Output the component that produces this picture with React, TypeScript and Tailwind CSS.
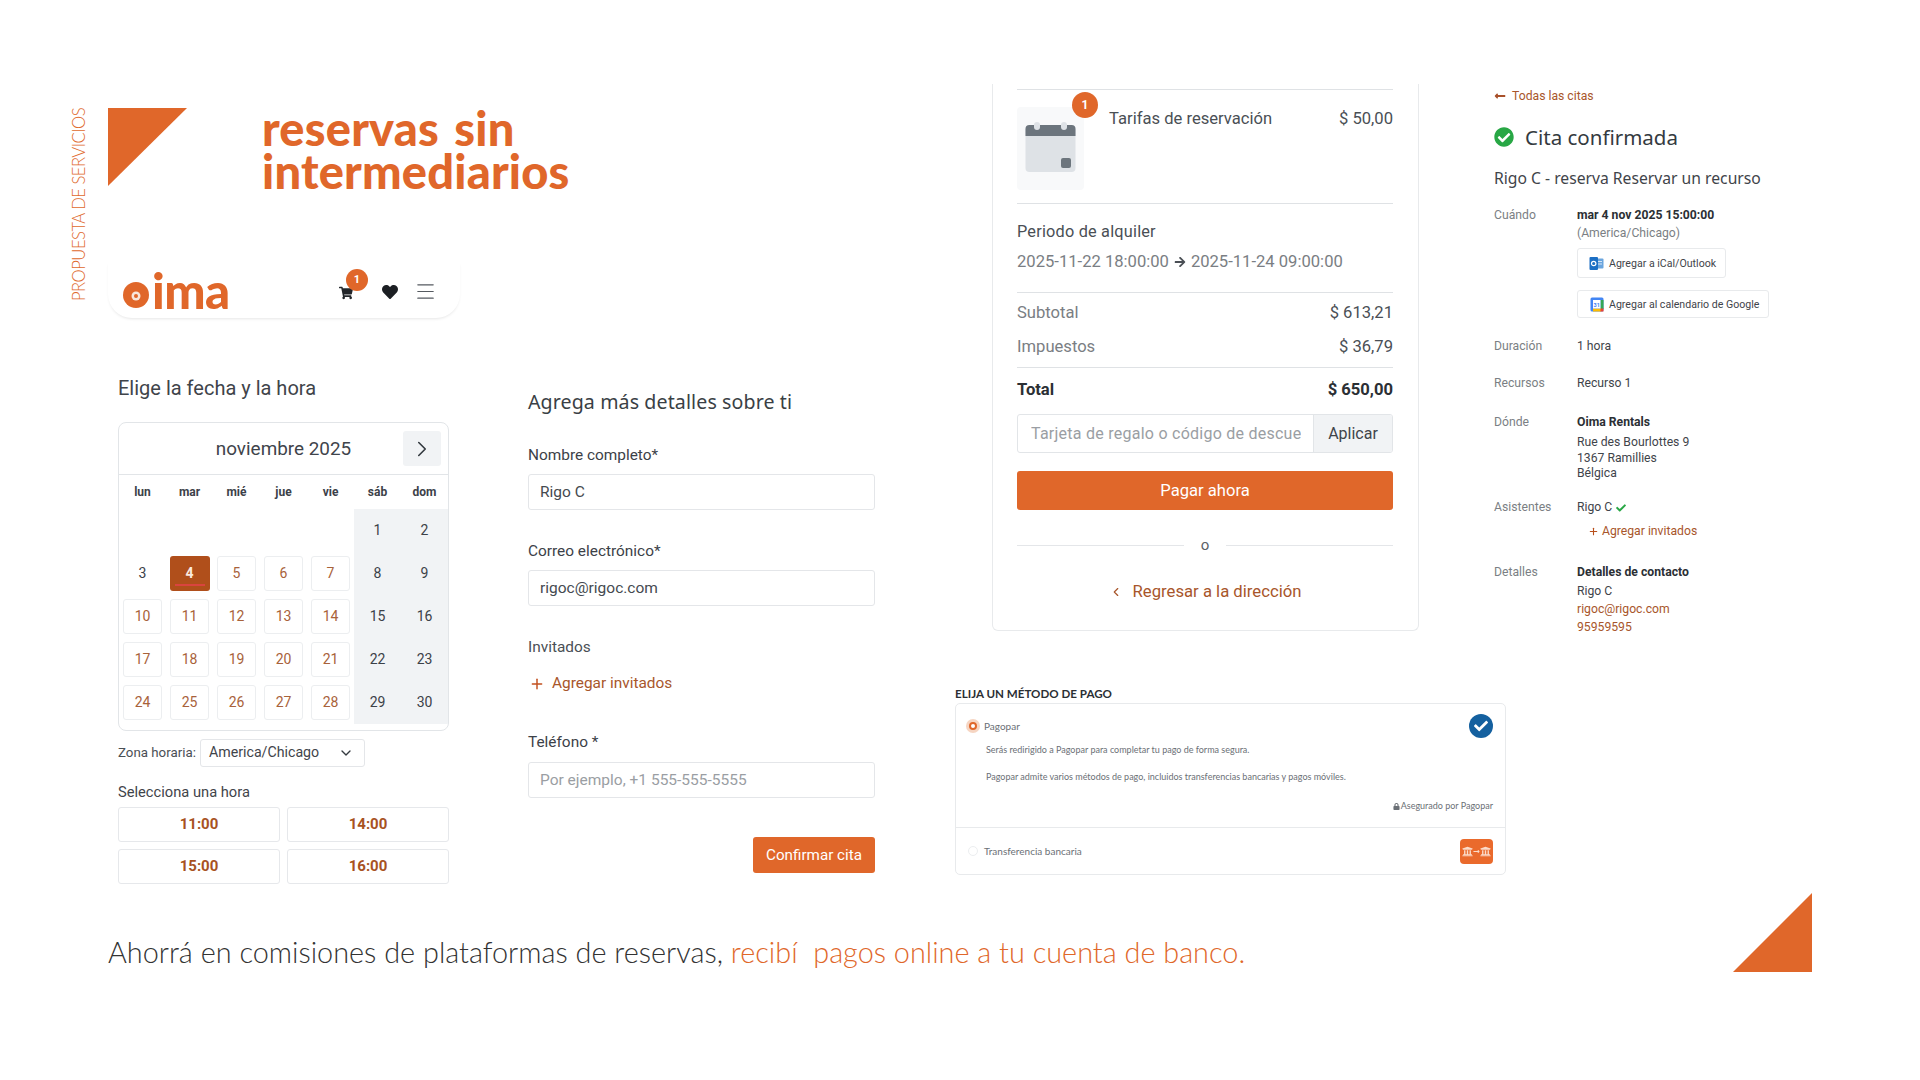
import React from 'react';
import { ChevronDown, ChevronLeft, ChevronRight, Menu, Plus } from 'lucide-react';
import { FaArrowRight, FaCheck, FaCheckCircle, FaHeart, FaLock, FaLongArrowAltLeft, FaLongArrowAltRight, FaShoppingCart, FaUniversity } from 'react-icons/fa';

const weekdays = ['lun', 'mar', 'mié', 'jue', 'vie', 'sáb', 'dom'];
const days: (number | null)[] = [null, null, null, null, null, 1, 2, ...Array.from({ length: 28 }, (_, i) => i + 3)];

function CalendarDay({ day, index }: { day: number | null; index: number }) {
    const weekend = index % 7 >= 5;
    const bookable = day !== null && !weekend && day > 3;
    return (
        <div className={`h-[43px] flex items-center justify-center ${weekend ? 'bg-[#f1f3f5]' : ''}`}>
            {weekend || !bookable ? (
                <span className="text-[14px] text-[#3c4148]">{day}</span>
            ) : day === 4 ? (
                <div className="w-[40px] h-[35px] rounded-[3px] bg-[#b04f1b] text-[#fbe9df] text-[14px] font-bold flex items-center justify-center relative">
                    4
                    <span className="absolute left-[5px] right-[5px] bottom-[5px] h-[2px] bg-[#d9443f]" />
                </div>
            ) : (
                <div className="w-[39px] h-[35px] rounded-[3px] border border-[#eceef0] text-[#a8623a] text-[14px] flex items-center justify-center">
                    {day}
                </div>
            )}
        </div>
    );
}

function Calendar() {
    return (
        <div className="w-[331px] h-[309px] rounded-lg border border-[#e2e5e8] overflow-hidden">
            <div className="h-[52px] pt-[2px] border-b border-[#e2e5e8] relative flex items-center justify-center text-[18.9px] text-[#3f444b]">
                noviembre 2025
                <div className="absolute left-[284px] top-[8px] w-[38px] h-[35px] rounded-[3px] bg-[#f1f3f5] flex items-center justify-center">
                    <ChevronRight size={26} strokeWidth={1.5} className="text-[#343a40]" />
                </div>
            </div>
            <div className="grid grid-cols-7 h-[34px] items-center text-center text-[12px] font-bold text-[#3c4148]">
                {weekdays.map((w) => <div key={w}>{w}</div>)}
            </div>
            <div className="grid grid-cols-7">
                {days.map((d, i) => <CalendarDay key={i} day={d} index={i} />)}
            </div>
        </div>
    );
}

function TimeButton({ label }: { label: string }) {
    return (
        <div className="h-[35px] rounded-[3px] border border-[#e6e8eb] flex items-center justify-center text-[15px] font-bold text-[#a8521f]">
            {label}
        </div>
    );
}

function Field({ label, value, placeholder, top }: { label: string; value?: string; placeholder?: string; top: string }) {
    return (
        <>
            <div className={`h-[24px] flex items-center text-[15.4px] text-[#3c4148] ${top}`}>{label}</div>
            <input
                readOnly
                defaultValue={value}
                placeholder={placeholder}
                className="mt-[6px] h-[36px] w-full rounded-[3px] border border-[#e4e6e9] px-[11px] pb-[1px] text-[15.5px] text-[#454a50] placeholder:text-[#9a9ea3] outline-none"
            />
        </>
    );
}

function SummaryRow({ label, amount }: { label: string; amount: string }) {
    return (
        <div className="h-[24px] flex items-center justify-between text-[16.6px]">
            <span className="text-[#7a7e83]">{label}</span>
            <span className="text-[#4a4f55]">{amount}</span>
        </div>
    );
}

function DetailLabel({ label, value, className = '' }: { label: string; value: React.ReactNode; className?: string }) {
    return (
        <div className={`h-[18px] flex items-center ${className}`}>
            <span className="w-[83px] text-[#7b7f84]">{label}</span>
            <span className="text-[#3f444a]">{value}</span>
        </div>
    );
}

function OutlookIcon() {
    return (
        <svg width="15" height="15" viewBox="0 0 15 15">
            <rect x="5" y="2.5" width="9.5" height="10" rx="1" fill="#6aa5de" />
            <rect x="7" y="5" width="6" height="1" fill="#d6e6f6" />
            <rect x="7" y="7.5" width="6" height="1" fill="#d6e6f6" />
            <rect x="0.5" y="1" width="8.5" height="13" rx="1" fill="#1c6fc4" />
            <circle cx="4.7" cy="7.5" r="2.2" fill="none" stroke="#fff" strokeWidth="1.2" />
        </svg>
    );
}

function GoogleCalendarIcon() {
    return (
        <svg width="14" height="15" viewBox="0 0 14 15">
            <rect x="0.5" y="0.5" width="13" height="14" rx="1.5" fill="#4285f4" />
            <rect x="10.5" y="3" width="3" height="9" fill="#34a853" />
            <rect x="3" y="11.5" width="8" height="3" fill="#fbbc04" />
            <rect x="10.5" y="11.5" width="3" height="3" fill="#ea4335" />
            <rect x="3" y="3" width="7.5" height="8.5" fill="#fff" />
            <text x="6.7" y="9.5" fontSize="5.5" fontWeight="700" textAnchor="middle" fill="#4285f4" fontFamily="Roboto, sans-serif">31</text>
        </svg>
    );
}

export default function App() {
    return (
        <div className="w-[1920px] h-[1080px] bg-white overflow-hidden pt-[84px] font-['Roboto',sans-serif]">
            <div className="flex h-[809px] pl-[70px]">
                {/* vertical tag */}
                <div className="w-[38px] pt-[24px]">
                    <div className="h-[193px] w-[19px] [writing-mode:vertical-rl] rotate-180 text-[16.6px] leading-[19px] whitespace-nowrap text-[#e0692c] font-['Lato',sans-serif] font-light tracking-[-0.5px]">
                        PROPUESTA DE SERVICIOS
                    </div>
                </div>

                {/* logo + calendar */}
                <div className="w-[420px] pt-[24px]">
                    <div className="flex h-[78px]">
                        <svg width="79" height="78" viewBox="0 0 79 78" className="shrink-0">
                            <polygon points="0,0 79,0 0,78" fill="#e0672a" />
                        </svg>
                        <div className="ml-[75px] mt-[-1px] text-[47px] leading-[43px] font-black text-[#e0672a] font-['Lato',sans-serif] tracking-[0.2px] [word-spacing:4px] whitespace-nowrap">
                            reservas sin<br />intermediarios
                        </div>
                    </div>

                    <div className="mt-[76px] w-[352px] h-[56px] rounded-b-[24px] shadow-[0_2px_3px_-1px_rgba(0,0,0,0.1)] flex items-center relative">
                        <div className="ml-[15px] flex items-center">
                            <svg width="26" height="26" viewBox="0 0 26 26" className="mt-[10px]">
                                <circle cx="13" cy="13" r="13" fill="#e0672a" />
                                <circle cx="13" cy="14" r="4.5" fill="#f8e6da" />
                                <circle cx="13" cy="14" r="2" fill="#e0672a" />
                            </svg>
                            <span className="ml-[3px] text-[49px] leading-[50px] font-black text-[#e0672a] font-['Lato',sans-serif] tracking-[-0.5px]">ima</span>
                        </div>
                        <div className="absolute left-[231px] top-[24px]">
                            <FaShoppingCart size={14} className="text-[#22262a]" />
                        </div>
                        <div className="absolute left-[238px] top-[7px] w-[22px] h-[22px] rounded-full bg-[#e0672a] text-white text-[11px] font-bold flex items-center justify-center">1</div>
                        <div className="absolute left-[274px] top-[22px]">
                            <FaHeart size={16} className="text-[#1c1f23]" />
                        </div>
                        <div className="absolute left-[306px] top-[18px]">
                            <Menu size={23} strokeWidth={1.3} className="text-[#555a60]" />
                        </div>
                    </div>

                    <div className="pl-[10px]">
                        <div className="mt-[56px] h-[28px] flex items-center text-[20px] text-[#3f444a]">Elige la fecha y la hora</div>
                        <div className="mt-[20px]"><Calendar /></div>
                        <div className="mt-[7px] h-[28px] pt-[1px] flex items-center text-[#4a4f55]">
                            <span className="w-[82px] text-[13.3px]">Zona horaria:</span>
                            <div className="w-[165px] h-[28px] rounded-[3px] border border-[#e4e6e9] px-[8px] flex items-center justify-between text-[14.2px] text-[#3f444a]">
                                America/Chicago
                                <ChevronDown size={16} className="mr-[2px] text-[#343a40]" />
                            </div>
                        </div>
                        <div className="mt-[16px] h-[20px] flex items-center text-[14.7px] text-[#3f444a]">Selecciona una hora</div>
                        <div className="mt-[5px] w-[331px] grid grid-cols-2 gap-x-[7px] gap-y-[7px]">
                            <TimeButton label="11:00" />
                            <TimeButton label="14:00" />
                            <TimeButton label="15:00" />
                            <TimeButton label="16:00" />
                        </div>
                    </div>
                </div>

                {/* form */}
                <div className="w-[427px]">
                    <div className="w-[347px] flex flex-col">
                        <div className="mt-[304px] h-[28px] flex items-center text-[19.6px] text-[#3a3f45] font-['Noto_Sans',sans-serif] tracking-[0.1px]">Agrega más detalles sobre ti</div>
                        <Field label="Nombre completo*" value="Rigo C" top="mt-[28px]" />
                        <Field label="Correo electrónico*" value="rigoc@rigoc.com" top="mt-[30px]" />
                        <div className="mt-[30px] h-[24px] flex items-center text-[15.4px] text-[#4a4f55]">Invitados</div>
                        <div className="mt-[12px] h-[24px] flex items-center text-[15.4px] text-[#a8562b]">
                            <Plus size={16} strokeWidth={2.2} className="ml-[1px] mr-[7px] text-[#c2501f]" />
                            Agregar invitados
                        </div>
                        <div className="mt-[35px] h-[24px] flex items-center text-[15.4px] text-[#3c4148]">Teléfono *</div>
                        <input
                            readOnly
                            placeholder="Por ejemplo, +1 555-555-5555"
                            className="mt-[7px] h-[36px] w-full rounded-[3px] border border-[#e4e6e9] px-[11px] pb-[1px] text-[15.5px] placeholder:text-[#9a9ea3] outline-none"
                        />
                        <div className="mt-[39px] self-end w-[122px] h-[36px] rounded-[3px] bg-[#e0672a] text-white text-[15.2px] flex items-center justify-center">Confirmar cita</div>
                    </div>
                </div>

                {/* checkout + payment */}
                <div className="w-[539px] shrink-0">
                    <div className="ml-[37px] w-[427px] h-[547px] border-x border-b border-[#e8eaec] rounded-b-[6px] pl-[24px] pr-[25px] pt-[5px]">
                        <div className="h-[115px] border-y border-[#dfe2e5] flex justify-between pt-[17px] relative">
                            <div className="w-[67px] h-[83px] rounded-[4px] bg-[#f8f9fa] pl-[8px] pt-[15px] shrink-0">
                                <svg width="52" height="52" viewBox="0 0 52 52">
                                    <rect x="0.5" y="3" width="50" height="47" rx="4" fill="#dee2e6" />
                                    <path d="M0.5 14 V7 a4 4 0 0 1 4 -4 H46.5 a4 4 0 0 1 4 4 V14 Z" fill="#6c757d" />
                                    <rect x="9" y="0" width="6" height="8" rx="3" fill="#dee2e6" />
                                    <rect x="36" y="0" width="6" height="8" rx="3" fill="#dee2e6" />
                                    <rect x="36" y="36" width="10" height="10" rx="2" fill="#6c757d" />
                                </svg>
                            </div>
                            <div className="absolute left-[55px] top-[2px] w-[26px] h-[26px] rounded-full bg-[#e0672a] text-white text-[12px] font-bold flex items-center justify-center">1</div>
                            <div className="ml-[25px] grow h-[24px] flex items-center justify-between text-[16.6px] text-[#4a4f55]">
                                <span>Tarifas de reservación</span>
                                <span>$ 50,00</span>
                            </div>
                        </div>
                        <div className="pt-[16px] pb-[18px] border-b border-[#dfe2e5]">
                            <div className="h-[24px] flex items-center text-[16.3px] text-[#4a4f55] tracking-[0.2px]">Periodo de alquiler</div>
                            <div className="mt-[6px] h-[24px] flex items-center text-[16.6px] text-[#7a7e83]">
                                2025-11-22 18:00:00
                                <FaArrowRight size={12} className="mx-[5px] text-[#4a4f55]" />
                                2025-11-24 09:00:00
                            </div>
                        </div>
                        <div className="pt-[8px] pb-[8px] border-b border-[#dfe2e5] flex flex-col gap-[10px]">
                            <SummaryRow label="Subtotal" amount="$ 613,21" />
                            <SummaryRow label="Impuestos" amount="$ 36,79" />
                        </div>
                        <div className="mt-[10px] h-[24px] flex items-center justify-between text-[16.6px] font-bold text-[#2b2f34]">
                            <span>Total</span>
                            <span>$ 650,00</span>
                        </div>
                        <div className="mt-[12px] h-[39px] flex rounded-[3px] border border-[#e2e5e8] overflow-hidden">
                            <input
                                readOnly
                                placeholder="Tarjeta de regalo o código de descuento"
                                className="w-[295px] pl-[13px] pr-[12px] text-[16px] tracking-[0.25px] placeholder:text-[#9a9ea3] outline-none"
                            />
                            <div className="grow bg-[#f1f3f5] border-l border-[#e2e5e8] flex items-center justify-center text-[16px] text-[#3f444a]">Aplicar</div>
                        </div>
                        <div className="mt-[18px] h-[39px] pt-[1px] rounded-[3px] bg-[#e0672a] text-white text-[16.6px] flex items-center justify-center">Pagar ahora</div>
                        <div className="mt-[25px] h-[20px] flex items-center text-[#5c6167]">
                            <span className="w-[167px] h-px bg-[#e4e6e9]" />
                            <span className="w-[42px] text-center text-[15px]">o</span>
                            <span className="grow h-px bg-[#e4e6e9]" />
                        </div>
                        <div className="mt-[25px] h-[24px] flex items-center justify-center text-[16.7px] text-[#a8562b]">
                            <ChevronLeft size={14} strokeWidth={2} className="mr-[10px]" />
                            Regresar a la dirección
                        </div>
                    </div>

                    <div className="mt-[54px] h-[18px] flex items-center text-[11.6px] font-bold text-[#2b2f34] font-['Lato',sans-serif]">ELIJA UN MÉTODO DE PAGO</div>
                    <div className="w-[551px] h-[172px] rounded-[5px] border border-[#e8eaec] font-['Lato',sans-serif] text-[#6b7076]">
                        <div className="h-[124px] border-b border-[#e8eaec] px-[10px] pt-[11px]">
                            <div className="h-[22px] flex items-center justify-between">
                                <div className="flex items-center text-[10px]">
                                    <span className="w-[14px] h-[14px] rounded-full bg-[#f6d5c2] flex items-center justify-center">
                                        <span className="w-[8px] h-[8px] rounded-full border-2 border-[#e0672a] bg-white" />
                                    </span>
                                    <span className="ml-[4px]">Pagopar</span>
                                </div>
                                <div className="w-[24px] h-[24px] mr-[2px] rounded-full bg-[#14609f] flex items-center justify-center text-white">
                                    <FaCheck size={14} />
                                </div>
                            </div>
                            <div className="mt-[7px] ml-[20px] h-[12px] flex items-center text-[9px]">Serás redirigido a Pagopar para completar tu pago de forma segura.</div>
                            <div className="mt-[15px] ml-[20px] h-[12px] flex items-center text-[9px]">Pagopar admite varios métodos de pago, incluidos transferencias bancarias y pagos móviles.</div>
                            <div className="mt-[17px] mr-[2px] h-[12px] flex items-center justify-end text-[9px]">
                                <FaLock size={7} className="mr-[1px]" />
                                Asegurado por Pagopar
                            </div>
                        </div>
                        <div className="h-[46px] px-[10px] flex items-center justify-between text-[10px]">
                            <div className="flex items-center">
                                <span className="w-[10px] h-[10px] ml-[2px] rounded-full border border-[#eceef0]" />
                                <span className="ml-[6px]">Transferencia bancaria</span>
                            </div>
                            <div className="w-[33px] h-[25px] mr-[2px] rounded-[4px] bg-[#ea6a2c] text-[#fbdcca] flex items-center justify-center">
                                <FaUniversity size={11} />
                                <FaLongArrowAltRight size={7} />
                                <FaUniversity size={11} />
                            </div>
                        </div>
                    </div>
                </div>

                {/* confirmation */}
                <div className="grow text-[12.2px]">
                    <div className="mt-[1px] h-[22px] flex items-center text-[#a8562b]">
                        <FaLongArrowAltLeft size={12} className="mr-[6px] text-[#a8502a]" />
                        Todas las citas
                    </div>
                    <div className="mt-[15px] h-[30px] flex items-center text-[20.5px] text-[#343a40] font-['Noto_Sans',sans-serif]">
                        <FaCheckCircle size={20} className="mr-[11px] text-[#28a745]" />
                        Cita confirmada
                    </div>
                    <div className="mt-[15px] h-[24px] flex items-center text-[15.7px] text-[#3f444a] font-['Noto_Sans',sans-serif]">Rigo C - reserva Reservar un recurso</div>
                    <DetailLabel className="mt-[15px]" label="Cuándo" value={<b className="text-[#2b2f34]">mar 4 nov 2025 15:00:00</b>} />
                    <div className="ml-[83px] h-[18px] flex items-center text-[#7b7f84]">(America/Chicago)</div>
                    <div className="ml-[83px] mt-[6px] w-[149px] h-[30px] pt-[1px] rounded-[3px] border border-[#e8eaec] flex items-center pl-[11px] text-[10.6px] text-[#3f444a]">
                        <OutlookIcon />
                        <span className="ml-[5px]">Agregar a iCal/Outlook</span>
                    </div>
                    <div className="ml-[83px] mt-[12px] w-[192px] h-[28px] pt-[1px] rounded-[3px] border border-[#e8eaec] flex items-center pl-[12px] text-[10.6px] text-[#3f444a]">
                        <GoogleCalendarIcon />
                        <span className="ml-[5px]">Agregar al calendario de Google</span>
                    </div>
                    <DetailLabel className="mt-[19px]" label="Duración" value="1 hora" />
                    <DetailLabel className="mt-[19px]" label="Recursos" value="Recurso 1" />
                    <DetailLabel className="mt-[21px]" label="Dónde" value={<b className="text-[#2b2f34]">Oima Rentals</b>} />
                    <div className="ml-[83px] mt-[4px] leading-[15.5px] text-[#3f444a]">
                        Rue des Bourlottes 9<br />1367 Ramillies<br />Bélgica
                    </div>
                    <DetailLabel
                        className="mt-[17px]"
                        label="Asistentes"
                        value={<span className="flex items-center">Rigo C<FaCheck size={10} className="ml-[4px] text-[#28a745]" /></span>}
                    />
                    <div className="ml-[94px] mt-[6px] h-[18px] flex items-center text-[#a8562b]">
                        <Plus size={11} strokeWidth={2.4} className="mr-[3px] text-[#b84f1c]" />
                        Agregar invitados
                    </div>
                    <DetailLabel className="mt-[23px]" label="Detalles" value={<b className="text-[#2b2f34]">Detalles de contacto</b>} />
                    <div className="ml-[83px] leading-[18px] text-[#3f444a]">
                        Rigo C
                        <div className="text-[#a8562b]">rigoc@rigoc.com</div>
                        <div className="text-[#a8562b]">95959595</div>
                    </div>
                </div>
            </div>

            {/* footer line */}
            <div className="h-[79px] pl-[108px] pr-[108px] flex justify-between">
                <div className="mt-[42px] h-[36px] flex items-center text-[28.85px] font-light font-['Lato',sans-serif] text-[#333333] whitespace-pre">
                    Ahorrá en comisiones de plataformas de reservas, <span className="text-[#e0672a]">recibí  pagos online a tu cuenta de banco.</span>
                </div>
                <svg width="79" height="79" viewBox="0 0 79 79" className="shrink-0">
                    <polygon points="79,0 79,79 0,79" fill="#e0672a" />
                </svg>
            </div>
        </div>
    );
}
